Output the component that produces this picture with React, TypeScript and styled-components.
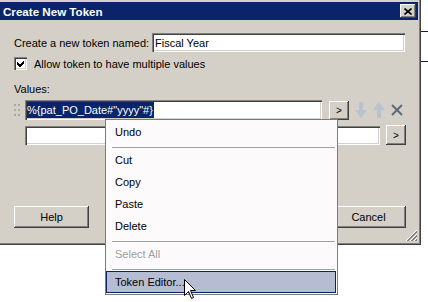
import React from 'react';
import styled, {createGlobalStyle, css} from 'styled-components';

const GlobalStyle = createGlobalStyle`
  html, body {
    margin: 0;
    padding: 0;
    background: #fff;
  }
  body {
    font-family: "Liberation Sans", Arial, sans-serif;
    font-size: 11px;
    color: #000;
  }
`;

const raised = css`
  background: #d4d0c8;
  box-shadow: inset -1px -1px #404040, inset 1px 1px #fff,
    inset -2px -2px #808080, inset 2px 2px #d4d0c8;
`;

const sunken = css`
  background: #fff;
  box-shadow: inset 1px 1px #808080, inset 2px 2px #404040,
    inset -1px -1px #fff, inset -2px -2px #d4d0c8;
`;

const MENU_ITEMS: Array<{label?: string; disabled?: boolean; active?: boolean}> = [
  {label: 'Undo'},
  {},
  {label: 'Cut'},
  {label: 'Copy'},
  {label: 'Paste'},
  {label: 'Delete'},
  {},
  {label: 'Select All', disabled: true},
  {},
  {label: 'Token Editor...', active: true},
];

const App = () => {
  return (
    <Page>
      <GlobalStyle />
      <Dialog>
        <TitleBar>
          <span>Create New Token</span>
          <CloseButton>
            <svg width="8" height="7" viewBox="0 0 8 7">
              <path d="M0.5 0.5 L7.5 6.5 M7.5 0.5 L0.5 6.5" stroke="#000" strokeWidth="1.6" />
            </svg>
          </CloseButton>
        </TitleBar>
        <Body>
          <NameRow>
            <NameLabel>Create a new token named:</NameLabel>
            <NameField>Fiscal Year</NameField>
          </NameRow>
          <CheckRow>
            <CheckBox>
              <svg width="9" height="9" viewBox="0 0 9 9" shapeRendering="crispEdges">
                <path d="M1 3v3l2 2h1l4-4V1L3.5 5.5z" fill="#000" />
              </svg>
            </CheckBox>
            <span>Allow token to have multiple values</span>
          </CheckRow>
          <ValuesLabel>Values:</ValuesLabel>
          <ValueRow $top={4}>
            <Handle>
              {Array.from({length: 6}).map((_, i) => (
                <Dot key={i} />
              ))}
            </Handle>
            <ValueField $w={297} $h={20}>
              <Selected>%{'{'}pat_PO_Date#"yyyy"#{'}'}</Selected>
            </ValueField>
            <SmallButton $h={19} $gap={7}>&gt;</SmallButton>
            <Tool>
              <svg width="12" height="16" viewBox="0 0 12 16">
                <path d="M4 0h4v8h4l-6 8-6-8h4z" fill="#b9c2cf" />
              </svg>
            </Tool>
            <Tool>
              <svg width="12" height="16" viewBox="0 0 12 16">
                <path d="M6 0l6 8h-4v8h-4v-8h-4z" fill="#b9c2cf" />
              </svg>
            </Tool>
            <Tool>
              <svg width="12" height="16" viewBox="0 0 12 16">
                <path d="M1 3 L11 13 M11 3 L1 13" stroke="#5d6a7c" strokeWidth="2" />
              </svg>
            </Tool>
          </ValueRow>
          <ValueRow $top={5}>
            <Handle />
            <ValueField $w={355} $h={19} />
            <SmallButton $h={20} $gap={6}>&gt;</SmallButton>
          </ValueRow>
          <ButtonRow>
            <PushButton>Help</PushButton>
            <PushButton>Cancel</PushButton>
          </ButtonRow>
        </Body>
        <Grip>
          <svg width="12" height="12" viewBox="0 0 12 12">
            <path d="M11 1L1 11M11 5L5 11M11 9L9 11" stroke="#808080" strokeWidth="1" />
            <path d="M11 2L2 11M11 6L6 11M11 10L10 11" stroke="#808080" strokeWidth="1" />
            <path d="M11 0L0 11M11 4L4 11M11 8L8 11" stroke="#fff" strokeWidth="1" />
          </svg>
        </Grip>
      </Dialog>
      <Backdrop>
        <BackLine $top={31} />
        <BackLine $top={29} />
      </Backdrop>
      <Menu>
        {MENU_ITEMS.map((item, i) =>
          item.label ? (
            <MenuItem key={i} $disabled={item.disabled} $active={item.active}>
              {item.label}
            </MenuItem>
          ) : (
            <MenuSeparator key={i} />
          ),
        )}
      </Menu>
      <Cursor width="13" height="21" viewBox="0 0 13 21">
        <path
          d="M0.5 0.5 L0.5 16.5 L4.5 12.5 L7.5 19.5 L9.5 18.5 L6.5 11.5 L11.5 11.5 Z"
          fill="#fff"
          stroke="#000"
          strokeWidth="1"
        />
      </Cursor>
    </Page>
  );
};

const Page = styled.div`
  position: relative;
  width: 428px;
  height: 302px;
  display: flex;
  align-items: flex-start;
  overflow: hidden;
  background: #fff;
`;

const Dialog = styled.div`
  position: relative;
  flex: none;
  width: 421px;
  height: 245px;
  box-sizing: border-box;
  padding: 2px 3px 0 0;
  display: flex;
  flex-direction: column;
  background: #d4d0c8;
  box-shadow: inset -1px -1px #404040, inset -2px -2px #808080;
`;

const TitleBar = styled.div`
  height: 18px;
  display: flex;
  align-items: center;
  justify-content: space-between;
  padding: 0 2px 0 3px;
  background: #0a246a;
  color: #fff;
  font-weight: bold;
  font-size: 11.6px;
`;

const CloseButton = styled.div`
  ${raised};
  width: 16px;
  height: 14px;
  display: flex;
  align-items: center;
  justify-content: center;
`;

const Body = styled.div`
  display: flex;
  flex-direction: column;
  padding: 13px 12px 0 14px;
`;

const NameRow = styled.div`
  display: flex;
  align-items: center;
  height: 19px;
`;

const NameLabel = styled.span`
  width: 138px;
  flex: none;
`;

const NameField = styled.div`
  ${sunken};
  flex: 1;
  height: 19px;
  margin-right: 1px;
  padding: 0 3px;
  display: flex;
  align-items: center;
`;

const CheckRow = styled.div`
  margin-top: 5px;
  height: 13px;
  display: flex;
  align-items: center;
  gap: 7px;
`;

const CheckBox = styled.div`
  ${sunken};
  width: 13px;
  height: 13px;
  display: flex;
  align-items: center;
  justify-content: center;
`;

const ValuesLabel = styled.div`
  margin-top: 13px;
  line-height: 13px;
`;

const ValueRow = styled.div<{$top: number}>`
  margin-top: ${({$top}) => $top}px;
  height: 20px;
  display: flex;
  align-items: center;
`;

const Handle = styled.div`
  width: 6px;
  height: 12px;
  margin-right: 5px;
  display: grid;
  grid-template-columns: 2px 2px;
  grid-auto-rows: 2px;
  column-gap: 2px;
  row-gap: 3px;
`;

const Dot = styled.span`
  background: #a8a8a8;
`;

const ValueField = styled.div<{$w: number; $h: number}>`
  ${sunken};
  width: ${({$w}) => $w}px;
  height: ${({$h}) => $h}px;
  box-sizing: border-box;
  padding: 0 2px;
  display: flex;
  align-items: center;
`;

const Selected = styled.span`
  background: #0a246a;
  color: #fff;
  line-height: 16px;
  padding: 0 1px 0 0;
`;

const SmallButton = styled.div<{$h: number; $gap: number}>`
  ${raised};
  width: 20px;
  height: ${({$h}) => $h}px;
  margin-left: ${({$gap}) => $gap}px;
  display: flex;
  align-items: center;
  justify-content: center;
  font-size: 10px;
`;

const Tool = styled.div`
  width: 12px;
  height: 16px;
  margin-left: 6px;
  display: flex;
`;

const ButtonRow = styled.div`
  margin-top: 61px;
  display: flex;
  justify-content: space-between;
`;

const PushButton = styled.div`
  ${raised};
  width: 75px;
  height: 22px;
  display: flex;
  align-items: center;
  justify-content: center;
`;

const Grip = styled.div`
  position: absolute;
  right: 3px;
  bottom: 3px;
  width: 12px;
  height: 12px;
  display: flex;
`;

const Backdrop = styled.div`
  flex: 1;
  display: flex;
  flex-direction: column;
`;

const BackLine = styled.div<{$top: number}>`
  margin-top: ${({$top}) => $top}px;
  height: 1px;
  background: #202020;
`;

const Menu = styled.div`
  position: absolute;
  left: 105px;
  top: 119px;
  width: 233px;
  box-sizing: border-box;
  padding: 1px 1px 1px 0;
  display: flex;
  flex-direction: column;
  background: #fcfafa;
  border: 1px solid #7b7b7b;
`;

const MenuItem = styled.div<{$disabled?: boolean; $active?: boolean}>`
  height: 22px;
  box-sizing: border-box;
  padding-left: 9px;
  display: flex;
  align-items: center;
  color: ${({$disabled}) => ($disabled ? '#a0a0a0' : '#000')};
  ${({$active}) =>
    $active &&
    css`
      background: #b6bdd2;
      border: 1px solid #0a246a;
      padding-left: 8px;
    `}
`;

const MenuSeparator = styled.div`
  height: 1px;
  margin: 4px 1px 1px 6px;
  background: #a0a0a0;
`;

const Cursor = styled.svg`
  position: absolute;
  left: 184px;
  top: 279px;
`;

export default App;
